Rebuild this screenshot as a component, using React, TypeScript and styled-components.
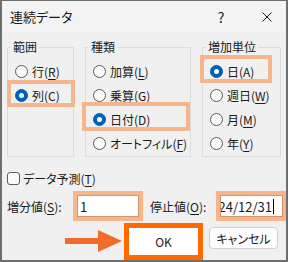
import styled, { createGlobalStyle } from 'styled-components';

const Global = createGlobalStyle`
  html, body {
    margin: 0;
    padding: 0;
    background: #ffffff;
  }
  body {
    font-family: "Noto Sans CJK JP", "Noto Sans", sans-serif;
    font-feature-settings: "palt";
    color: #1a1a1a;
  }
`;

const Window = styled.div`
  width: 288px;
  height: 262px;
  box-sizing: border-box;
  border: 2px solid #6e6e6e;
  border-top-width: 1px;
  background: #f0f0f0;
  display: flex;
  flex-direction: column;
  overflow: hidden;
`;

const TitleBar = styled.div`
  height: 31px;
  flex: none;
  display: flex;
  align-items: center;
  background: #f3f3f3;
  padding-left: 8px;
  font-size: 13px;
`;

const Title = styled.span`
  flex: 1;
`;

const TitleButton = styled.span`
  width: 38px;
  display: flex;
  align-items: center;
  justify-content: center;
  font-size: 14px;
  & + & {
    margin-left: 8px;
  }
`;

const Body = styled.div`
  padding: 0 5px;
  display: flex;
  flex-direction: column;
  font-size: 12px;
`;

const Groups = styled.div`
  display: flex;
  gap: 11px;
  margin-top: 8px;
`;

const Group = styled.fieldset<{ $w: number }>`
  width: ${(p) => p.$w}px;
  height: 117px;
  min-width: 0;
  box-sizing: border-box;
  margin: 0;
  padding: 0 0 0 7px;
  border: 1px solid #dcdcdc;
`;

const Legend = styled.legend`
  padding: 0 2px;
  margin-left: -4px;
  font-size: 12px;
  line-height: 14px;
`;

const Options = styled.div`
  display: flex;
  flex-direction: column;
  padding-top: 5px;
`;

const Option = styled.div`
  position: relative;
  display: flex;
  align-items: center;
  gap: 4px;
  height: 24px;
  white-space: nowrap;
`;

const Radio = styled.span<{ $on?: boolean }>`
  width: 13px;
  height: 13px;
  flex: none;
  box-sizing: border-box;
  border-radius: 50%;
  border: 1px solid ${(p) => (p.$on ? '#005fb8' : '#5c5c5c')};
  background: ${(p) => (p.$on ? '#005fb8' : '#fafafa')};
  display: flex;
  align-items: center;
  justify-content: center;

  &::after {
    content: '';
    display: ${(p) => (p.$on ? 'block' : 'none')};
    width: 5px;
    height: 5px;
    border-radius: 50%;
    background: #ffffff;
  }
`;

const Mark = styled.span<{ $x: number; $y: number; $w: number; $h: number }>`
  position: absolute;
  left: ${(p) => p.$x}px;
  top: ${(p) => p.$y}px;
  width: ${(p) => p.$w}px;
  height: ${(p) => p.$h}px;
  box-sizing: border-box;
  border: 4px solid #f7b58c;
  pointer-events: none;
`;

const Key = styled.span`
  text-decoration: underline;
  text-underline-offset: 2px;
`;

const CheckRow = styled.div`
  display: flex;
  align-items: center;
  gap: 3px;
  height: 20px;
  margin-top: 11px;
`;

const CheckBox = styled.span`
  width: 13px;
  height: 13px;
  box-sizing: border-box;
  border: 1px solid #5c5c5c;
  border-radius: 3px;
  background: #fafafa;
`;

const ValueRow = styled.div`
  display: flex;
  align-items: center;
  height: 22px;
  margin-top: 7px;
`;

const FieldLabel = styled.span<{ $w: number; $gap?: number }>`
  width: ${(p) => p.$w}px;
  margin-left: ${(p) => p.$gap ?? 0}px;
  flex: none;
  white-space: nowrap;
`;

const Field = styled.div<{ $w: number; $end?: boolean }>`
  width: ${(p) => p.$w}px;
  height: 22px;
  flex: none;
  box-sizing: border-box;
  background: #ffffff;
  border: 1px solid #d9936a;
  outline: 4px solid #f7b58c;
  display: flex;
  align-items: center;
  justify-content: ${(p) => (p.$end ? 'flex-end' : 'flex-start')};
  padding: ${(p) => (p.$end ? '0 8px 0 0' : '0 0 0 2px')};
  overflow: hidden;
  font-size: 13px;
  white-space: nowrap;
`;

const FieldText = styled.span`
  flex: none;
`;

const Caret = styled.span`
  width: 1px;
  height: 15px;
  flex: none;
  background: #000000;
  margin-left: 1px;
`;

const Actions = styled.div`
  display: flex;
  align-items: flex-start;
  justify-content: flex-end;
  margin-top: 6px;
  padding-right: 3px;
`;

const Arrow = styled.svg`
  flex: none;
  margin-top: 6px;
  margin-right: 2px;
`;

const OkButton = styled.div`
  width: 79px;
  height: 37px;
  box-sizing: border-box;
  border: 5px solid #ff6a00;
  background: #ffffff;
  display: flex;
  align-items: center;
  justify-content: center;
`;

const CancelButton = styled.div`
  width: 69px;
  height: 22px;
  margin-top: 4px;
  margin-left: 6px;
  box-sizing: border-box;
  border: 1px solid #d0d0d0;
  border-radius: 4px;
  background: #fdfdfd;
  display: flex;
  align-items: center;
  justify-content: center;
`;

const App = () => {
  return (
    <>
      <Global />
      <Window>
        <TitleBar>
          <Title>連続データ</Title>
          <TitleButton>?</TitleButton>
          <TitleButton>
            <svg width="10" height="10" viewBox="0 0 10 10">
              <path d="M0.5 0.5 L9.5 9.5 M9.5 0.5 L0.5 9.5" stroke="#1a1a1a" strokeWidth="1" />
            </svg>
          </TitleButton>
        </TitleBar>
        <Body>
          <Groups>
            <Group $w={67}>
              <Legend>範囲</Legend>
              <Options>
                <Option>
                  <Radio />
                  <span>行(<Key>R</Key>)</span>
                </Option>
                <Option>
                  <Radio $on />
                  <span>列(<Key>C</Key>)</span>
                  <Mark $x={-8} $y={-3} $w={68} $h={27} />
                </Option>
              </Options>
            </Group>
            <Group $w={106}>
              <Legend>種類</Legend>
              <Options>
                <Option>
                  <Radio />
                  <span>加算(<Key>L</Key>)</span>
                </Option>
                <Option>
                  <Radio />
                  <span>乗算(<Key>G</Key>)</span>
                </Option>
                <Option>
                  <Radio $on />
                  <span>日付(<Key>D</Key>)</span>
                  <Mark $x={-11} $y={-5} $w={108} $h={29} />
                </Option>
                <Option>
                  <Radio />
                  <span>オートフィル(<Key>F</Key>)</span>
                </Option>
              </Options>
            </Group>
            <Group $w={79}>
              <Legend>増加単位</Legend>
              <Options>
                <Option>
                  <Radio $on />
                  <span>日(<Key>A</Key>)</span>
                  <Mark $x={-10} $y={-4} $w={72} $h={28} />
                </Option>
                <Option>
                  <Radio />
                  <span>週日(<Key>W</Key>)</span>
                </Option>
                <Option>
                  <Radio />
                  <span>月(<Key>M</Key>)</span>
                </Option>
                <Option>
                  <Radio />
                  <span>年(<Key>Y</Key>)</span>
                </Option>
              </Options>
            </Group>
          </Groups>

          <CheckRow>
            <CheckBox />
            <span>データ予測(<Key>T</Key>)</span>
          </CheckRow>

          <ValueRow>
            <FieldLabel $w={70}>増分値(<Key>S</Key>):</FieldLabel>
            <Field $w={62}>
              <FieldText>1</FieldText>
            </Field>
            <FieldLabel $w={70} $gap={11}>停止値(<Key>O</Key>):</FieldLabel>
            <Field $w={63} $end>
              <FieldText>2024/12/31</FieldText>
              <Caret />
            </Field>
          </ValueRow>

          <Actions>
            <Arrow width="57" height="24" viewBox="0 0 57 24">
              <path d="M0 9 H33 V1 L57 12 L33 23 V15 H0 Z" fill="#f26b2b" />
            </Arrow>
            <OkButton>OK</OkButton>
            <CancelButton>キャンセル</CancelButton>
          </Actions>
        </Body>
      </Window>
    </>
  );
};

export default App;
